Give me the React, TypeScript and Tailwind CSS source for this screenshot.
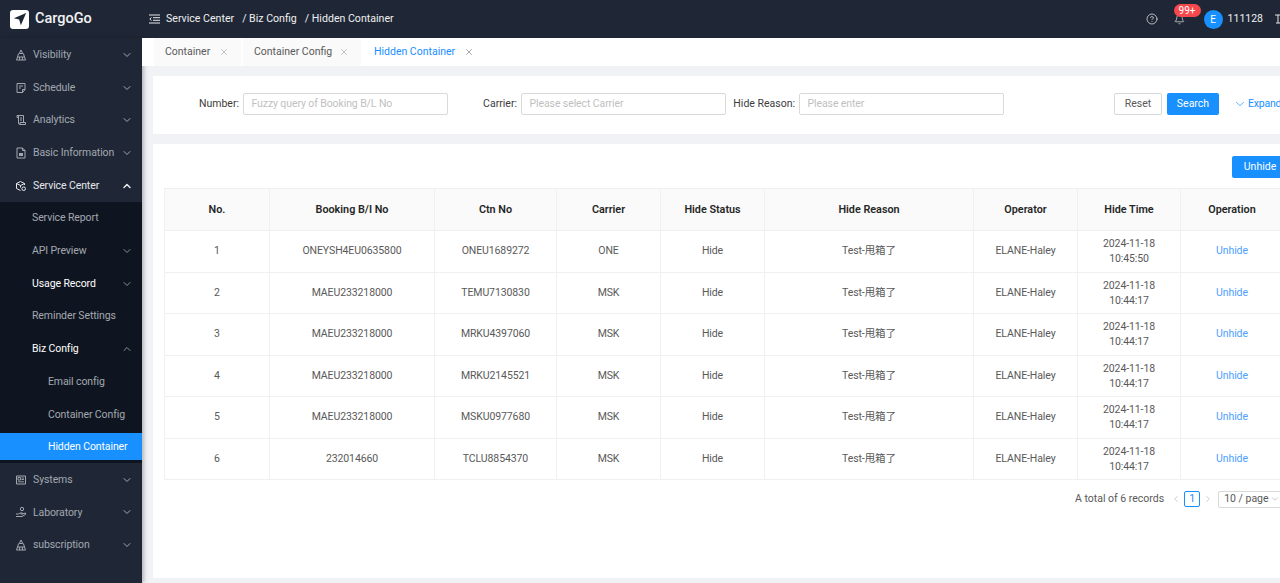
import { ChevronDown, ChevronUp, ChevronLeft, ChevronRight, CircleHelp, Bell, X } from 'lucide-react';

const font = "font-['Roboto','Noto_Sans_CJK_SC',sans-serif]";

const rows = [
  ['1', 'ONEYSH4EU0635800', 'ONEU1689272', 'ONE', '10:45:50'],
  ['2', 'MAEU233218000', 'TEMU7130830', 'MSK', '10:44:17'],
  ['3', 'MAEU233218000', 'MRKU4397060', 'MSK', '10:44:17'],
  ['4', 'MAEU233218000', 'MRKU2145521', 'MSK', '10:44:17'],
  ['5', 'MAEU233218000', 'MSKU0977680', 'MSK', '10:44:17'],
  ['6', '232014660', 'TCLU8854370', 'MSK', '10:44:17'],
];

const Svg = ({ children }: { children: React.ReactNode }) => (
  <svg viewBox="0 0 12 12" fill="none" stroke="currentColor" strokeWidth="1" className="h-[12px] w-[12px] shrink-0">
    {children}
  </svg>
);

const TowerIcon = () => (
  <Svg>
    <path d="M6 1 4.300 4.500h3.400zM3.600 4.500 2.500 8h7L8.400 4.500M2.500 8 1.500 11h9l-1-3M4.600 8v3M7.400 8v3" />
  </Svg>
);
const NoteIcon = () => (
  <Svg>
    <path d="M7.500 10.500H2V1.500h8v6zM7.500 10.500V7.500H10M4 4h4M4 6h2" />
  </Svg>
);
const ScrollIcon = () => (
  <Svg>
    <path d="M2 1.500h6.500v7M2 1.500v2h1.500M3.500 1.500V9a1.500 1.500 0 0 0 1.500 1.500h5.500V8.500H5V10.500M5 4h2M5 6h2" />
  </Svg>
);
const FileIcon = () => (
  <Svg>
    <path d="M2 1h5.500L10 3.500V11H2zM7.500 1v2.500H10" />
    <path d="M4 6h4v3H4z" fill="currentColor" stroke="none" />
  </Svg>
);
const BoxGearIcon = () => (
  <Svg>
    <path d="M5.500 10.500 1.500 8.500v-5l4-2 4 2V5M1.500 3.500l4 2 4-2M5.500 5.500v2" />
    <circle cx="8.700" cy="8.700" r="1.800" />
  </Svg>
);
const PanelIcon = () => (
  <Svg>
    <path d="M1.500 2h9v8h-9z" />
    <path d="M3 3.500h2.500V6H3zM6.500 4h2.500M6.500 5.500h2.500M3 7.800h6" strokeWidth="0.900" />
  </Svg>
);
const HandIcon = () => (
  <Svg>
    <circle cx="7" cy="3" r="1.700" />
    <path d="M1 8h2.500l1.500-1h2.500v1H5.500M7.500 8l3-1v1.500L7 10.500H1" />
  </Svg>
);

const MenuItem = ({ icon, label, active }: { icon: React.ReactNode; label: string; active?: boolean }) => (
  <div className={`flex h-[32.7px] items-center pl-[15px] pr-[9px] ${active ? 'text-[#e6e8eb]' : 'text-[#a3a8b0]'}`}>
    {icon}
    <span className="ml-[6px] flex-1 whitespace-nowrap text-[10.5px] tracking-[-0.1px]">{label}</span>
    {active ? <ChevronUp className="h-3 w-3" strokeWidth={3} /> : <ChevronDown className="h-3 w-3" strokeWidth={2} />}
  </div>
);

const SubItem = ({ label, bright, arrow, indent }: { label: string; bright?: boolean; arrow?: 'up' | 'down'; indent?: boolean }) => (
  <div className={`flex h-[32.7px] items-center whitespace-nowrap pr-[9px] text-[10.5px] tracking-[-0.1px] ${indent ? 'pl-[48px]' : 'pl-8'} ${bright ? 'text-white' : 'text-[#a3a8b0]'}`}>
    <span className="flex-1">{label}</span>
    {arrow === 'up' && <ChevronUp className="h-3 w-3 text-[#8a8f98]" strokeWidth={2} />}
    {arrow === 'down' && <ChevronDown className="h-3 w-3 text-[#8a8f98]" strokeWidth={2} />}
  </div>
);

const Tab = ({ label, active, width }: { label: string; active?: boolean; width: string }) => (
  <div className={`flex h-full items-center justify-between whitespace-nowrap pl-[11px] pr-[12px] text-[10.5px] ${width} ${active ? 'bg-white text-[#1890ff]' : 'bg-[#fafafa] text-[#595959]'}`}>
    <span>{label}</span>
    <X className={`h-[10px] w-[10px] ${active ? 'text-[#595959]' : 'text-[#8c8c8c]'}`} strokeWidth={1.25} />
  </div>
);

const Field = ({ label, placeholder, labelWidth }: { label: string; placeholder: string; labelWidth: string }) => (
  <div className="flex items-center">
    <span className={`whitespace-nowrap text-right text-[10.5px] text-[#3c3c3c] ${labelWidth}`}>{label}</span>
    <div className="ml-[4px] flex h-[22px] w-[205px] items-center rounded-[2px] border border-[#d9d9d9] pl-[7.5px] text-[10.5px] tracking-[-0.1px] text-[#bfbfbf]">{placeholder}</div>
  </div>
);

export default function App() {
  return (
    <div className={`flex h-[583px] w-[1280px] flex-col overflow-hidden bg-[#f0f2f5] ${font}`}>
      <header className="flex h-[38px] shrink-0 items-center bg-[#1f2737] text-white">
        <div className="flex w-[149px] items-center pl-[10px]">
          <div className="flex h-[19px] w-[19px] items-center justify-center rounded-[3px] bg-white">
            <svg viewBox="0 0 16 16" className="h-[14px] w-[14px]">
              <path d="M15 1 1 7l6 1.600L9 15z" fill="#1f2737" />
            </svg>
          </div>
          <span className="ml-[6px] text-[14.5px] font-medium leading-none text-[#f2f2f2]">CargoGo</span>
        </div>
        <svg viewBox="0 0 11 10" fill="none" stroke="currentColor" strokeWidth="1" className="h-[10px] w-[11px] text-[#e6e6e6]">
          <path d="M0 1h11M4 3.700h7M4 6.300h7M0 9h11M2.500 3.500 0.800 5l1.700 1.500" />
        </svg>
        <div className="ml-[6px] flex items-center gap-[8px] whitespace-nowrap text-[10.6px] text-[#f0f0f0]">
          <span>Service Center</span>
          <span>/ Biz Config</span>
          <span>/ Hidden Container</span>
        </div>
        <div className="ml-auto flex items-center">
          <CircleHelp className="h-3 w-3 text-[#e6e6e6]" strokeWidth={1.5} />
          <div className="relative ml-[16px] mr-[19px] h-[11px]">
            <Bell className="h-[11px] w-[11px] text-[#e6e6e6]" strokeWidth={1.5} />
            <span className="absolute bottom-[7.5px] left-0 flex h-[13px] items-center rounded-full bg-[#f5484d] px-[5px] text-[10px] leading-none text-white">99+</span>
          </div>
          <div className="flex h-[19px] w-[19px] items-center justify-center rounded-full bg-[#1890ff] text-[10px]">E</div>
          <span className="ml-[5px] text-[10.5px] text-[#f0f0f0]">111128</span>
          <svg viewBox="0 0 5 10" fill="none" stroke="currentColor" strokeWidth="1" className="ml-[12px] h-[10px] w-[5px] text-[#e6e6e6]">
            <path d="M0 1h5M3 1v8M1 9h4" />
          </svg>
        </div>
      </header>

      <div className="flex min-h-0 flex-1">
        <aside className="w-[142px] shrink-0 bg-[#1f2737] pt-[0.5px] shadow-[2px_0_4px_rgba(0,0,0,0.25)]">
          <MenuItem icon={<TowerIcon />} label="Visibility" />
          <MenuItem icon={<NoteIcon />} label="Schedule" />
          <MenuItem icon={<ScrollIcon />} label="Analytics" />
          <MenuItem icon={<FileIcon />} label="Basic Information" />
          <MenuItem icon={<BoxGearIcon />} label="Service Center" active />
          <div className="bg-[#0f1520]">
            <SubItem label="Service Report" />
            <SubItem label="API Preview" arrow="down" />
            <SubItem label="Usage Record" bright arrow="down" />
            <SubItem label="Reminder Settings" />
            <SubItem label="Biz Config" bright arrow="up" />
            <SubItem label="Email config" indent />
            <SubItem label="Container Config" indent />
            <div className="flex h-[32.7px] items-center pb-[1px]">
              <div className="flex h-[27px] w-full items-center bg-[#1890ff] pl-[48px] text-[10.5px] tracking-[-0.1px] text-white">Hidden Container</div>
            </div>
          </div>
          <MenuItem icon={<PanelIcon />} label="Systems" />
          <MenuItem icon={<HandIcon />} label="Laboratory" />
          <MenuItem icon={<TowerIcon />} label="subscription" />
        </aside>

        <main className="min-w-0 flex-1">
          <div className="w-[1160px] pl-[11px]">
            <div className="-ml-[11px] flex h-[28px] bg-white pl-[12px]">
              <div className="flex h-full gap-[2px]">
                <Tab label="Container" width="w-[87px]" />
                <Tab label="Container Config" width="w-[118px]" />
                <Tab label="Hidden Container" width="w-[123px]" active />
              </div>
            </div>

            <section className="mt-[10px] flex h-[58px] items-center bg-white pb-[2px]">
              <Field label="Number:" placeholder="Fuzzy query of Booking B/L No" labelWidth="w-[86px]" />
              <Field label="Carrier:" placeholder="Please select Carrier" labelWidth="w-[69px]" />
              <Field label="Hide Reason:" placeholder="Please enter" labelWidth="w-[69px]" />
              <button className="ml-[110px] h-[22px] w-[48px] rounded-[2px] border border-[#d9d9d9] text-[10.5px] text-[#595959]">Reset</button>
              <button className="ml-[5px] h-[22px] w-[52px] rounded-[2px] bg-[#1890ff] text-[10.5px] text-white">Search</button>
              <span className="ml-[14px] flex items-center whitespace-nowrap text-[10.5px] tracking-[-0.2px] text-[#1890ff]">
                <ChevronDown className="mr-[1px] h-[14px] w-[14px]" strokeWidth={1.25} />
                Expand
              </span>
            </section>

            <section className="mt-[10px] h-[434px] bg-white pl-[11px] pt-[12px]">
              <div className="flex justify-end">
                <button className="mr-[14px] h-[22px] w-[56px] rounded-[2px] bg-[#1890ff] text-[10.5px] text-white">Unhide</button>
              </div>
              <table className="mt-[10px] w-[1119px] table-fixed border-collapse text-center text-[10.5px] tracking-[-0.1px] text-[#595959]">
                <colgroup>
                  <col className="w-[105px]" />
                  <col className="w-[165px]" />
                  <col className="w-[122px]" />
                  <col className="w-[104px]" />
                  <col className="w-[104px]" />
                  <col className="w-[209px]" />
                  <col className="w-[104px]" />
                  <col className="w-[103px]" />
                  <col className="w-[103px]" />
                </colgroup>
                <thead>
                  <tr className="h-[42px] bg-[#fafafa] text-[#262626]">
                    {['No.', 'Booking B/I No', 'Ctn No', 'Carrier', 'Hide Status', 'Hide Reason', 'Operator', 'Hide Time', 'Operation'].map((h) => (
                      <th key={h} className="border border-[#f0f0f0] pt-[1px] text-[10.8px] font-semibold tracking-normal">{h}</th>
                    ))}
                  </tr>
                </thead>
                <tbody>
                  {rows.map((r) => (
                    <tr key={r[0]} className="h-[41.5px]">
                      <td className="border border-[#f0f0f0]">{r[0]}</td>
                      <td className="border border-[#f0f0f0]">{r[1]}</td>
                      <td className="border border-[#f0f0f0]">{r[2]}</td>
                      <td className="border border-[#f0f0f0]">{r[3]}</td>
                      <td className="border border-[#f0f0f0]">Hide</td>
                      <td className="border border-[#f0f0f0]">Test-甩箱了</td>
                      <td className="border border-[#f0f0f0]">ELANE-Haley</td>
                      <td className="border border-[#f0f0f0] leading-[15px]">2024-11-18<br />{r[4]}</td>
                      <td className="border border-[#f0f0f0] text-[#4d9fff]">Unhide</td>
                    </tr>
                  ))}
                </tbody>
              </table>
              <div className="mt-[10px] flex h-[18px] items-center whitespace-nowrap text-[10.5px] text-[#595959]">
                <span className="ml-[911px]">A total of 6 records</span>
                <ChevronLeft className="ml-[7px] h-[10px] w-[10px] text-[#c4c4c4]" />
                <span className="ml-[3px] flex h-[16px] w-[16px] items-center justify-center rounded-[2px] border border-[#1890ff] text-[#1890ff]">1</span>
                <ChevronRight className="ml-[3px] h-[10px] w-[10px] text-[#c4c4c4]" />
                <span className="ml-[5px] flex h-[17px] w-[68px] shrink-0 items-center justify-between rounded-[2px] border border-[#d9d9d9] px-[5px]">
                  10 / page
                  <ChevronDown className="h-[10px] w-[10px] text-[#bfbfbf]" />
                </span>
              </div>
            </section>
          </div>
        </main>
      </div>
    </div>
  );
}
